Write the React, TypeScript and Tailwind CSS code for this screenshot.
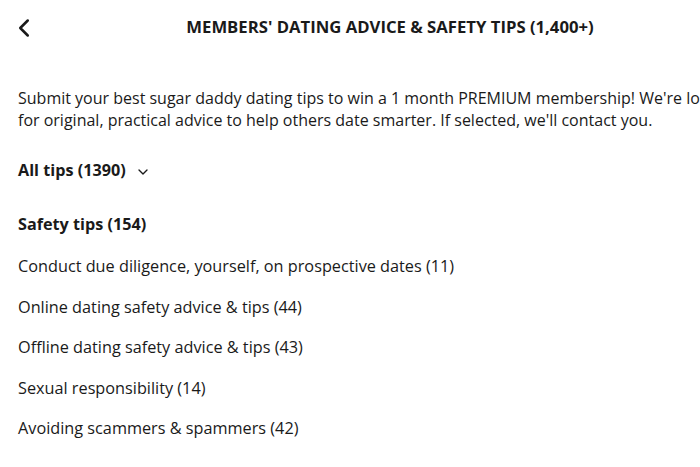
import { ChevronLeft, ChevronDown } from "lucide-react";

const ITEMS = [
  { label: "Conduct due diligence, yourself, on prospective dates", count: 11 },
  { label: "Online dating safety advice & tips", count: 44 },
  { label: "Offline dating safety advice & tips", count: 43 },
  { label: "Sexual responsibility", count: 14 },
  { label: "Avoiding scammers & spammers", count: 42 },
];

export default function App() {
  return (
    <div className="w-[700px] h-[467px] overflow-hidden bg-white text-[#1a1a1a] font-['Open_Sans',sans-serif]">
      <div className="w-[780px]">
        <header className="relative flex items-center justify-center h-[54px]">
          <button type="button" className="absolute left-[9px] top-[13px] text-[#1a1a1a]">
            <ChevronLeft size={30} strokeWidth={2} />
          </button>
          <h1 className="text-[16.7px] font-bold">
            MEMBERS' DATING ADVICE &amp; SAFETY TIPS (1,400+)
          </h1>
        </header>

        <div className="px-[18px] pt-[33px]">
          <p className="text-[16px] leading-[22px] pr-[4px]">
            Submit your best sugar daddy dating tips to win a 1 month PREMIUM membership! We're looking
            for original, practical advice to help others date smarter. If selected, we'll contact you.
          </p>

          <div className="mt-[28px] flex items-center gap-[9px] text-[16.2px] font-bold leading-[22px]">
            All tips (1390)
            <ChevronDown size={16} strokeWidth={2} className="mt-[4px]" />
          </div>

          <div className="mt-[32px] text-[16.2px] font-bold leading-[22px]">Safety tips (154)</div>

          <ul className="mt-[20px] flex flex-col gap-[18.5px]">
            {ITEMS.map((it) => (
              <li key={it.label} className="text-[16.25px] leading-[22px]">
                {it.label} ({it.count})
              </li>
            ))}
          </ul>
        </div>
      </div>
    </div>
  );
}
